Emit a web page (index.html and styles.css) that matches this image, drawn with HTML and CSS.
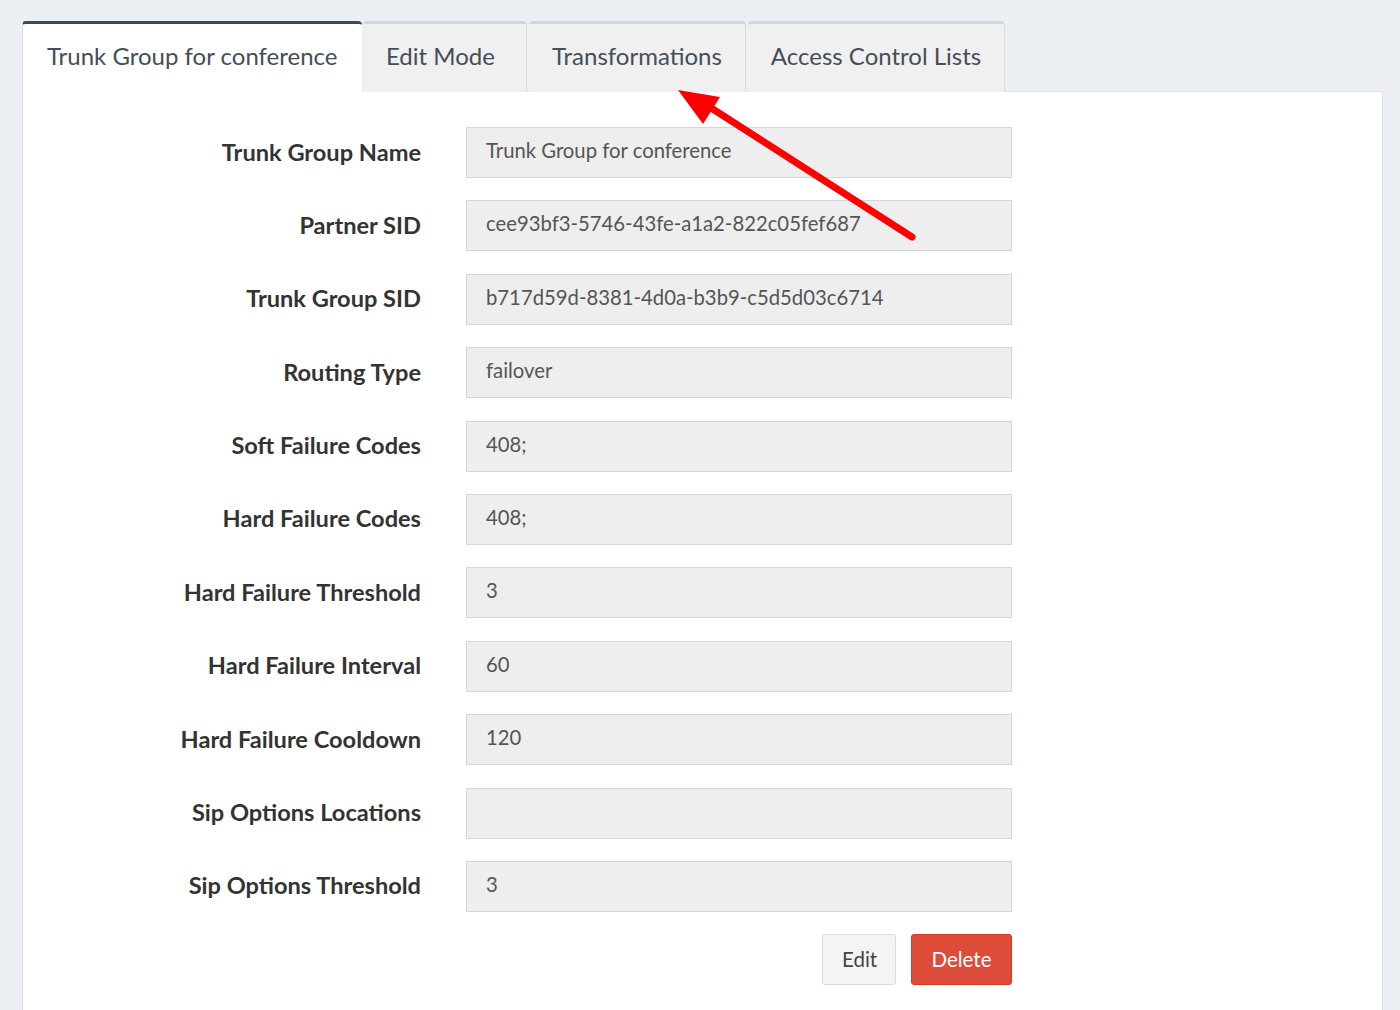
FILE: index.html
```html
<!DOCTYPE html>
<html lang="en">
<head>
    <meta charset="UTF-8">
    <title>Trunk Group for conference</title>
    <link rel="stylesheet" href="styles.css">
</head>
<body>
    <div class="tabs-box">
        <ul class="tab-list">
            <li class="tab active">Trunk Group for conference</li>
            <li class="tab">Edit Mode</li>
            <li class="tab">Transformations</li>
            <li class="tab">Access Control Lists</li>
        </ul>
        <div class="tab-panel">
            <div class="form-grid">
                <label>Trunk Group Name</label>
                <div class="field">Trunk Group for conference</div>
                <label>Partner SID</label>
                <div class="field">cee93bf3-5746-43fe-a1a2-822c05fef687</div>
                <label>Trunk Group SID</label>
                <div class="field">b717d59d-8381-4d0a-b3b9-c5d5d03c6714</div>
                <label>Routing Type</label>
                <div class="field">failover</div>
                <label>Soft Failure Codes</label>
                <div class="field">408;</div>
                <label>Hard Failure Codes</label>
                <div class="field">408;</div>
                <label>Hard Failure Threshold</label>
                <div class="field">3</div>
                <label>Hard Failure Interval</label>
                <div class="field">60</div>
                <label>Hard Failure Cooldown</label>
                <div class="field">120</div>
                <label>Sip Options Locations</label>
                <div class="field"></div>
                <label>Sip Options Threshold</label>
                <div class="field">3</div>
                <div class="actions">
                    <button class="btn btn-default">Edit</button>
                    <button class="btn btn-danger">Delete</button>
                </div>
            </div>
        </div>
    </div>

    <!-- annotation arrow drawn over the screenshot -->
    <svg class="callout" width="1400" height="1010" viewBox="0 0 1400 1010">
        <line x1="912" y1="237" x2="708" y2="106" stroke="#ff0000" stroke-width="7" stroke-linecap="round"/>
        <polygon points="678,90 720,97 703,124" fill="#ff0000"/>
    </svg>
</body>
</html>
```

FILE: styles.css
```css
body {
    margin: 0;
    padding: 21px 17px 0 22px;
    background-color: #ecf0f5;
    font-family: 'Lato', 'Open Sans', sans-serif;
    color: #333;
    overflow: hidden;
}
.tabs-box {
    width: 1361px;
}
.tab-list {
    display: flex;
    gap: 2px;
    margin: 0;
    padding: 0;
    list-style: none;
}
.tab {
    box-sizing: border-box;
    min-width: 164px;
    height: 71px;
    line-height: 64px;
    padding: 0 23px;
    font-size: 24px;
    color: #444e58;
    background: #f0f0f0;
    border-top: 3px solid #d2d6de;
    border-right: 1px solid #dcdcdc;
    border-radius: 4px 4px 0 0;
    margin-bottom: -1px;
    position: relative;
}
.tab.active {
    width: 340px;
    margin-right: -1px;
    padding: 0 0 0 24px;
    background: #fff;
    border-top-color: #3c4b57;
    border-right: none;
    border-left: 1px solid #e0e0e0;
    z-index: 1;
}
.tab-panel {
    background: #fff;
    border: 1px solid #dde1e6;
    padding: 35px 0 40px;
    min-height: 900px;
}
.form-grid {
    display: grid;
    grid-template-columns: 398px 546px;
    grid-auto-rows: 51px;
    column-gap: 45px;
    row-gap: 22.4px;
}
.form-grid label {
    display: flex;
    align-items: center;
    justify-content: flex-end;
    padding-bottom: 2px;
    font-size: 23.6px;
    font-weight: bold;
    color: #333;
}
.field {
    box-sizing: border-box;
    height: 51px;
    padding: 0 19px 5px;
    display: flex;
    align-items: center;
    font-size: 20.3px;
    color: #555;
    background: #eee;
    border: 1px solid #d2d6de;
}
.actions {
    grid-column: 2;
    display: flex;
    justify-content: flex-end;
    gap: 15px;
}
.btn {
    box-sizing: border-box;
    height: 51px;
    padding: 0 19px 2px;
    font-family: inherit;
    font-size: 20.5px;
    border-radius: 3px;
    border: 1px solid #ddd;
}
.btn-default {
    width: 74px;
    background: #f4f4f4;
    color: #444;
}
.btn-danger {
    width: 101px;
    background: #dd4b39;
    border-color: #d73925;
    color: #fff;
}
.callout {
    position: absolute;
    top: 0;
    left: 0;
    pointer-events: none;
}
```
